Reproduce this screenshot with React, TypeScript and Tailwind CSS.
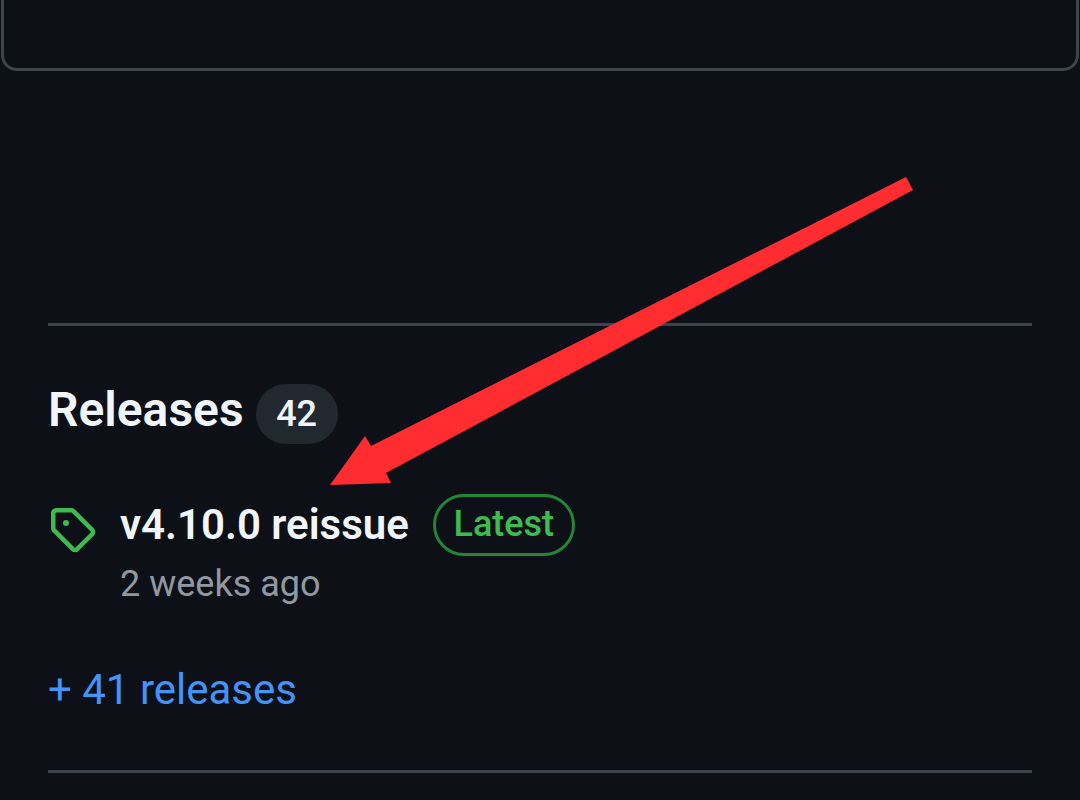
export default function App() {
  return (
    <div className="relative w-[1080px] h-[800px] overflow-hidden bg-[#0d1117] font-['Roboto',sans-serif] text-[#f0f6fc]">
      <div className="h-[71px] mx-px border-[3px] border-t-0 border-[#3d444d] rounded-b-[16px]" />
      <div className="mx-12 mt-[252px] h-[3px] bg-[#3d444d]" />
      <div className="mx-12 mt-[58px] flex items-center gap-[12px] h-[60px]">
        <h2 className="text-[48px] leading-[52px] mb-[8px] font-semibold">Releases</h2>
        <span className="h-[60px] w-[82px] rounded-full bg-[#212830] flex items-center justify-center text-[36px] font-medium">42</span>
      </div>
      <div className="mx-12 mt-[50px] flex">
        <svg viewBox="0 0 16 16" className="w-12 h-12 mt-[11px] fill-[#3fb950]">
          <path d="M1 7.775V2.75C1 1.784 1.784 1 2.75 1h5.025c.464 0 .91.184 1.238.513l6.25 6.25a1.75 1.75 0 0 1 0 2.474l-5.026 5.026a1.75 1.75 0 0 1-2.474 0l-6.25-6.25A1.752 1.752 0 0 1 1 7.775Zm1.5 0c0 .066.026.13.073.177l6.25 6.25a.25.25 0 0 0 .354 0l5.025-5.025a.25.25 0 0 0 0-.354l-6.25-6.25a.25.25 0 0 0-.177-.073H2.75a.25.25 0 0 0-.25.25ZM6 5a1 1 0 1 1 0 2 1 1 0 0 1 0-2Z" />
        </svg>
        <div className="ml-6">
          <div className="flex items-center gap-[24px] h-[62px]">
            <span className="text-[42px] leading-[62px] font-semibold">v4.10.0 reissue</span>
            <span className="h-[62px] w-[142px] rounded-full border-[3px] border-[#238636] text-[#3fb950] text-[36px] font-medium flex items-center justify-center pb-[2px]">Latest</span>
          </div>
          <div className="mt-px text-[36px] leading-[54px] text-[#9198a1]">2 weeks ago</div>
        </div>
      </div>
      <div className="mx-12 mt-[49px] text-[42px] leading-[60px] text-[#4493f8]">+ 41 releases</div>
      <div className="mx-12 mt-[50px] h-[3px] bg-[#3d444d]" />
      <svg className="absolute left-0 top-0 pointer-events-none" width="1080" height="800" viewBox="0 0 1080 800">
        <polygon fill="#ff2d2f" points="906,177 913,190 386,473 391,483 330,485 365,436 371,446" />
      </svg>
    </div>
  );
}
